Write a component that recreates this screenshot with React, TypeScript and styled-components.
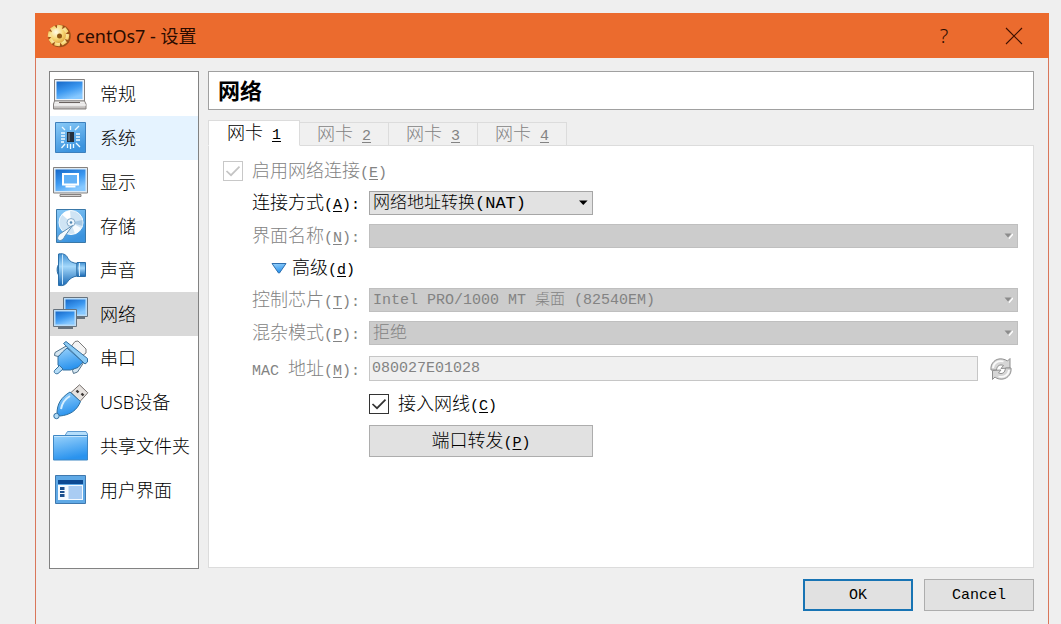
import React, { useState } from 'react';
import styled, { createGlobalStyle, css } from 'styled-components';

const ui = '"Noto Sans", "Noto Sans CJK SC", sans-serif';
const mono = '"Liberation Mono", "Noto Sans CJK SC", monospace';

const GlobalStyle = createGlobalStyle`
  *, *::before, *::after { box-sizing: border-box; }
  body { margin: 0; background: #efefef; color: #000; font-family: ${mono}; }
  button, input, select { font: inherit; color: inherit; margin: 0; }
`;

const Desktop = styled.div`
  display: flex;
  min-height: 100vh;
  padding: 13px 12px 0 35px;
`;

const Dialog = styled.section`
  flex: 1;
  min-width: 0;
  display: flex;
  flex-direction: column;
  background: #efefef;
  border: 1px solid #d9765a;
  border-top: 0;
  border-bottom: 0;
`;

const TitleBar = styled.header`
  display: flex;
  align-items: center;
  height: 45px;
  margin: 0 -1px;
  padding-left: 11px;
  gap: 4px;
  background: #eb6b2e;
  color: #2a0b00;
  font-family: ${ui};
`;

const Title = styled.h1`
  flex: 1;
  margin: 0;
  font-size: 18px;
  line-height: 24px;
  font-weight: 400;
`;

const CaptionButtons = styled.div`
  display: flex;
`;

const CaptionButton = styled.button`
  display: flex;
  align-items: center;
  justify-content: center;
  width: 70px;
  height: 45px;
  padding: 0;
  border: 0;
  background: none;
  font-size: 20px;
  font-weight: 300;
`;

const Body = styled.div`
  flex: 1;
  display: flex;
  gap: 9px;
  padding: 13px 14px 10px 13px;
`;

const Sidebar = styled.nav`
  width: 150px;
  flex: none;
  background: #fff;
  border: 1px solid #828282;
`;

const NavItem = styled.button<{ $tone?: 'hover' | 'active' }>`
  display: flex;
  align-items: center;
  gap: 11px;
  width: 100%;
  height: 44px;
  padding: 0 0 0 3px;
  border: 0;
  background: ${p => (p.$tone === 'active' ? '#d9d9d9' : p.$tone === 'hover' ? '#e5f3ff' : 'none')};
  font-family: ${ui};
  font-size: 18px;
  font-weight: 300;
  line-height: 24px;
  white-space: nowrap;
  text-align: left;
`;

const Main = styled.main`
  flex: 1;
  min-width: 0;
  display: flex;
  flex-direction: column;
  padding-bottom: 1px;
`;

const PageTitle = styled.h2`
  margin: 0 0 10px;
  height: 39px;
  padding-left: 9px;
  border: 1px solid #a0a0a0;
  background: #fff;
  font-family: ${ui};
  font-size: 22px;
  font-weight: 700;
  line-height: 36px;
`;

const TabList = styled.div`
  display: flex;
  align-items: flex-end;
  height: 26px;
  position: relative;
  margin-bottom: -1px;
`;

const Tab = styled.button<{ $active: boolean }>`
  display: flex;
  align-items: center;
  justify-content: center;
  height: 24px;
  width: 89px;
  padding: 0;
  background: #f0f0f0;
  border: 1px solid #dcdcdc;
  border-left: 0;
  color: #838383;
  ${p =>
    p.$active &&
    css`
      width: 92px;
      height: 26px;
      background: #fff;
      color: #000;
      border-left: 1px solid #dcdcdc;
      border-bottom-color: #fff;
    `}
`;

const Panel = styled.div`
  flex: 1;
  padding: 14px 15px 20px 14px;
  background: #fff;
  border: 1px solid #dcdcdc;
`;

const Form = styled.div`
  display: grid;
  grid-template-columns: 20px 108px minmax(0, 1fr);
  column-gap: 9px;
  row-gap: 9px;
  align-items: center;
`;

const FieldLabel = styled.label<{ $off?: boolean }>`
  grid-column: 2;
  display: flex;
  color: ${p => (p.$off ? '#838383' : '#000')};
`;

const EnableLabel = styled(FieldLabel)`
  grid-column: 2 / 4;
`;

const TextRun = styled.span`
  display: block;
  height: 22px;
  padding-top: 1px;
  font-size: 18px;
  font-weight: 300;
  line-height: 22px;
  white-space: pre;
`;

const Latin = styled.span`
  font-size: 15px;
  font-weight: 400;
  line-height: 16px;
`;

const Key = styled.u`
  text-underline-offset: 2px;
  text-decoration-thickness: 1px;
`;

const SelectBox = styled.div<{ $fit?: boolean }>`
  display: grid;
  align-items: center;
  height: 24px;
  width: ${p => (p.$fit ? '224px' : 'auto')};
  & > * { grid-area: 1 / 1; }
  & > svg { justify-self: end; margin-right: 5px; pointer-events: none; }
`;

const Select = styled.select<{ $size: number }>`
  appearance: none;
  width: 100%;
  height: 24px;
  padding: 0 24px 0 3px;
  border: 1px solid #a6a6a6;
  border-radius: 0;
  background: #e2e2e2;
  font-size: ${p => p.$size}px;
  font-weight: 300;
  &:disabled {
    opacity: 1;
    color: #838383;
    background: #cccccc;
    border-color: #bfbfbf;
  }
`;

const AdvancedToggle = styled.button`
  grid-column: 2 / 4;
  justify-self: start;
  display: flex;
  align-items: center;
  gap: 5px;
  height: 22px;
  padding: 0 0 0 19px;
  border: 0;
  background: none;
`;

const MacRow = styled.div`
  display: flex;
  align-items: center;
  gap: 11px;
  height: 29px;
  padding-right: 5px;
`;

const TextInput = styled.input`
  flex: 1;
  min-width: 0;
  height: 25px;
  padding: 0 2px;
  border: 1px solid #c6c6c6;
  background: #f0f0f0;
  font-size: 15px;
  &:disabled { color: #838383; }
`;

const IconButton = styled.button`
  display: flex;
  padding: 0;
  border: 0;
  background: none;
`;

const CheckBox = styled.span`
  display: grid;
  width: 20px;
  height: 20px;
  & > * { grid-area: 1 / 1; }
  & > svg { pointer-events: none; }
`;

const CheckInput = styled.input`
  appearance: none;
  width: 20px;
  height: 20px;
  border: 1px solid #333;
  background: #fff;
  &:disabled { border-color: #c8c8c8; }
`;

const CableRow = styled.div`
  grid-column: 3;
  display: flex;
  align-items: center;
  gap: 9px;
  height: 24px;
`;

const PushButton = styled.button<{ $primary?: boolean; $wide?: boolean }>`
  display: flex;
  align-items: center;
  justify-content: center;
  width: ${p => (p.$wide ? '224px' : '110px')};
  height: 32px;
  padding: 0;
  background: #e1e1e1;
  border: ${p => (p.$primary ? '2px solid #1874b4' : '1px solid #adadad')};
  font-size: 15px;
`;

const FieldCell = styled.div`
  grid-column: 3;
`;

const Footer = styled.footer`
  display: flex;
  justify-content: flex-end;
  gap: 11px;
  padding: 0 14px 13px;
`;

/* Sets han characters at 18px and latin runs at half that advance; "_x" marks the mnemonic key. */
function Text({ children }: { children: string }) {
  const parts = children.match(/[\u4e00-\u9fff]+|[^\u4e00-\u9fff]+/g) ?? [];
  return (
    <TextRun>
      {parts.map((part, i) => {
        if (/[\u4e00-\u9fff]/.test(part)) return part;
        const at = part.indexOf('_');
        if (at < 0) return <Latin key={i}>{part}</Latin>;
        return (
          <Latin key={i}>
            {part.slice(0, at)}
            <Key>{part[at + 1]}</Key>
            {part.slice(at + 2)}
          </Latin>
        );
      })}
    </TextRun>
  );
}

function Arrow({ off }: { off?: boolean }) {
  return (
    <svg width="9" height="6" viewBox="0 0 9 6" aria-hidden="true">
      {off && <path d="M9 1 5 5.6" stroke="#fff" strokeWidth="1.4" />}
      <path d={off ? 'M.5.5h7L4 4.5z' : 'M0 .5h8.6L4.3 5z'} fill={off ? '#8b8b8b' : '#000'} />
    </svg>
  );
}

function Check({ id, off, defaultChecked }: { id: string; off?: boolean; defaultChecked?: boolean }) {
  const [on, setOn] = useState(!!defaultChecked);
  return (
    <CheckBox>
      <CheckInput id={id} type="checkbox" disabled={off} checked={on} onChange={e => setOn(e.target.checked)} />
      {on && (
        <svg width="20" height="20" viewBox="0 0 20 20" aria-hidden="true">
          <path d="M3.5 10l4.5 4.2L16.5 5.6" fill="none" stroke={off ? '#c4c4c4' : '#333'} strokeWidth="1.7" />
        </svg>
      )}
    </CheckBox>
  );
}

const HiddenDefs = styled.svg`
  display: block;
`;

function Gradients() {
  return (
    <HiddenDefs width="0" height="0" aria-hidden="true">
      <defs>
        <linearGradient id="screen" x1="0" y1="0" x2="0.5" y2="1">
          <stop offset="0" stopColor="#1668c8" />
          <stop offset="0.55" stopColor="#3c98f0" />
          <stop offset="1" stopColor="#86c8ff" />
        </linearGradient>
        <linearGradient id="sky" x1="0" y1="0" x2="0.4" y2="1">
          <stop offset="0" stopColor="#8acbf8" />
          <stop offset="1" stopColor="#3b93de" />
        </linearGradient>
        <linearGradient id="folder" x1="0" y1="0" x2="0.3" y2="1">
          <stop offset="0" stopColor="#9bd3fb" />
          <stop offset="1" stopColor="#2a93ee" />
        </linearGradient>
        <linearGradient id="cone" x1="0" y1="0" x2="0" y2="1">
          <stop offset="0" stopColor="#3f8fd2" />
          <stop offset="0.4" stopColor="#a4d8fb" />
          <stop offset="1" stopColor="#1868b4" />
        </linearGradient>
        <linearGradient id="metal" x1="0" y1="0" x2="0" y2="1">
          <stop offset="0" stopColor="#fff" />
          <stop offset="1" stopColor="#b4b0ae" />
        </linearGradient>
        <radialGradient id="gold" gradientUnits="userSpaceOnUse" cx="10" cy="9" r="15">
          <stop offset="0" stopColor="#fffbe8" />
          <stop offset="0.45" stopColor="#f8d978" />
          <stop offset="1" stopColor="#d48a1c" />
        </radialGradient>
      </defs>
    </HiddenDefs>
  );
}

const icons: Record<string, React.ReactNode> = {
  general: (
    <>
      <path d="M1.5 3.5h30V25h-30z" fill="#eef3f8" stroke="#85817f" />
      <path d="M3.5 5.5h26v17.5h-26z" fill="url(#screen)" />
      <path d="M1.5 25h30l1.500 3v5H.5v-5z" fill="url(#metal)" stroke="#85817f" />
      <path d="M6 26.500h21" stroke="#69625f" />
      <path d="M1 29h32" stroke="#fff" />
    </>
  ),
  system: (
    <>
      <path d="M2.500 2.500h30v30h-30z" fill="url(#sky)" stroke="#3d80bd" />
      <path d="M14 12h7v10h-7z" fill="#25303d" />
      <path d="M15 13h2v8h-2z" fill="#5a6876" />
      <path
        d="M17.500 6v4M22 10l4-4M12 10l-3-3M8 13h4M8 16h4M8 19h4M8 22h3M23 14h4M23 17h4M23 20h4M23 23l4 4M12 24l-3.500 4M14.500 24v4M17.500 24v5M20.500 24v4"
        stroke="#eefaff"
        strokeWidth="1.300"
      />
    </>
  ),
  display: (
    <>
      <path d="M.5 3.500h34V29H.5z" fill="#dceaf5" stroke="#85817f" />
      <path d="M2.500 5.500h30V27h-30z" fill="url(#screen)" />
      <path d="M10 10h15v10.500H10z" fill="#63b1f6" stroke="#fff" strokeWidth="2" />
      <path d="M12.500 22.500h10" stroke="#fff" strokeWidth="2" />
      <path d="M7 30.500h21v2H7z" fill="#d5d2d0" stroke="#85817f" />
    </>
  ),
  storage: (
    <>
      <path d="M3.500 1.500h29v33h-29z" fill="url(#sky)" stroke="#3a78a8" />
      <circle cx="18" cy="14.500" r="12" fill="#cfe4f4" stroke="#f4fbff" />
      <path d="M18 14.500 9 6.500a12 12 0 0 1 8-4z" fill="#fff" />
      <path d="M18 14.500 28 20a12 12 0 0 1-6 6z" fill="#f7fcff" />
      <path d="M18 14.500 29.500 12v6z" fill="#a6c8e3" />
      <circle cx="18" cy="14.500" r="4" fill="#eff7fd" stroke="#87adcb" />
      <circle cx="18" cy="14.500" r="1.300" fill="#5489b4" />
      <path d="M19.500 17.500 9 24.500c-4 2.500-5.500 6-3.500 7.500s5-.5 6.500-4z" fill="#f5fafd" stroke="#5f8fb5" />
    </>
  ),
  sound: (
    <>
      <path d="M6 12c-2.500 2.500-2.500 9 0 11.500z" fill="#2d7fc2" stroke="#2c6fa8" />
      <path d="M5.500 2c5.500-1 8 1 9.500 4.500 1.500 3 5 4.500 9 5v12.500c-4 .5-8 3-10 6.500-1.500 2.500-4 3.500-8.500 3z" fill="url(#cone)" stroke="#2c6fa8" />
      <path d="M9.500 2.500v30" stroke="#c6e6fb" />
      <path d="M24 10.500h8.500v14H24z" fill="url(#cone)" stroke="#2c6fa8" />
      <path d="M26.500 11v13" stroke="#d7eefd" />
    </>
  ),
  network: (
    <>
      <path d="M10.500 1.500h24v19h-24z" fill="#b9dcf8" stroke="#66727d" />
      <path d="M12.500 3.500h20v15h-20z" fill="url(#screen)" />
      <path d="M24 22h8" stroke="#66727d" strokeWidth="2" />
      <path d="M.5 13.500h23v17H.5z" fill="#b9dcf8" stroke="#66727d" />
      <path d="M2.500 15.500h19v13h-19z" fill="url(#screen)" />
      <path d="M5 32h15" stroke="#66727d" strokeWidth="2" />
    </>
  ),
  serial: (
    <>
      <path d="M18.500 6l3.500-4.500 3-.5 8 8v4l-4 3z" fill="#f4f4f4" stroke="#7a7a7a" />
      <path d="M14 5.500l3 3-12 8-3.500-1 .5-3z" fill="#d5e6f1" stroke="#52738c" />
      <path d="M28 19l3 3-6.500 10-4 1.500-1-3z" fill="#d5e6f1" stroke="#52738c" />
      <path d="M9.500 12 14 8l16 14-5 5.500-7.500 2.500H9.500L5 25V17z" fill="url(#folder)" stroke="#336f9f" />
      <path d="M10.500 3.500 13 1.500l21.500 17v3.500l-2.500 2z" fill="#8ccbf5" stroke="#336f9f" />
      <path d="M6.500 25.500l3.500 3.500-5 4.500c-2.500 1-4.500-1-3.500-3z" fill="#b4dcf7" stroke="#336f9f" />
    </>
  ),
  usb: (
    <>
      <path d="M18 8.500 26.500.8l8.300 8L27 17.500z" fill="#e6e2df" stroke="#77706d" />
      <path d="M23.500 6.500l2 2M28.500 9.500l2 2" stroke="#3b3533" strokeWidth="2.400" />
      <path d="M4 29.500C4 20 8 13.500 17 8l10.500 9.500C24 26.500 17 31 7 32z" fill="url(#folder)" stroke="#2d6f9f" />
      <path d="M8 25c1-6 4-10 9-13" stroke="#d6efff" strokeWidth="2" fill="none" />
      <circle cx="3.500" cy="32" r="2.700" fill="#b4dcf7" stroke="#336f9f" />
    </>
  ),
  folder: (
    <>
      <path d="M12 7.500 14.500 3.500h18.500L34.500 6v4H12z" fill="#b5defb" stroke="#5f9bd0" />
      <path d="M.5 7.500h34v24.500H.5z" fill="url(#folder)" stroke="#3f87c4" />
      <path d="M1 8.500h33" stroke="#c5e6fe" />
    </>
  ),
  ui: (
    <>
      <path d="M2.500 3.500h30v28h-30z" fill="#5fa9e6" stroke="#3f78ae" />
      <path d="M5 8h25v4H5z" fill="#0d4a93" />
      <path d="M5 13h25v15H5z" fill="#f4f9fe" />
      <path d="M15.500 14H29v13H15.500z" fill="#a9ccf3" />
      <path d="M7 15h4.500v3H7zM7 19h4.500v2H7zM7 22h4.500v3H7z" fill="#1a4f8e" />
    </>
  ),
};

const sections: { icon: string; name: string; tone?: 'hover' | 'active' }[] = [
  { icon: 'general', name: '常规' },
  { icon: 'system', name: '系统', tone: 'hover' },
  { icon: 'display', name: '显示' },
  { icon: 'storage', name: '存储' },
  { icon: 'sound', name: '声音' },
  { icon: 'network', name: '网络', tone: 'active' },
  { icon: 'serial', name: '串口' },
  { icon: 'usb', name: 'USB设备' },
  { icon: 'folder', name: '共享文件夹' },
  { icon: 'ui', name: '用户界面' },
];

function GearIcon() {
  const teeth = [10, 55, 100, 145, 190, 235, 280, 325];
  return (
    <svg width="26" height="26" viewBox="0 0 26 26" aria-hidden="true">
      <circle cx="13.500" cy="13" r="11.300" fill="#8a4a12" opacity="0.8" />
      {teeth.map(a => (
        <path key={a} d="M10 7V2.500h4.500V7z" fill="url(#gold)" stroke="url(#gold)" strokeLinejoin="round" transform={`rotate(${a} 12.500 12.500)`} />
      ))}
      <circle cx="12.500" cy="12.500" r="7.500" fill="url(#gold)" />
      <circle cx="13.500" cy="13" r="2.500" fill="#8f5613" />
    </svg>
  );
}

function RefreshIcon() {
  return (
    <svg width="24" height="24" viewBox="0 0 24 24" aria-hidden="true">
      <g fill="#d6d6d6" stroke="#909090" strokeWidth="1" strokeLinejoin="round">
        <path d="M2 13C1 6 7 .8 13.500 2c2 .3 3.500 1 5 2L21 1.500V11l-9 .5 2.500-3C11 7 8 8.500 7.500 13z" />
        <path d="M22 11c1 7-5 12.200-11.500 11-2-.3-3.500-1-4.500-2l-2.500 2.500V13.500l8.500-.5-2.500 3c3.500 1.500 6.500 0 7-5z" />
      </g>
      <path d="M4 11c.5-5 5.500-8 10.500-6.500M20 13c-.5 5-5.500 8-10.500 6.500" fill="none" stroke="#fafafa" strokeWidth="1.800" />
    </svg>
  );
}

export default function App() {
  const [tab, setTab] = useState(1);
  return (
    <>
      <GlobalStyle />
      <Gradients />
      <Desktop>
        <Dialog aria-label="centOs7 - 设置">
          <TitleBar>
            <GearIcon />
            <Title>centOs7 - 设置</Title>
            <CaptionButtons>
              <CaptionButton type="button">?</CaptionButton>
              <CaptionButton type="button" aria-label="关闭">
                <svg width="18" height="18" viewBox="0 0 18 18" aria-hidden="true">
                  <path d="M1 1l16 16M17 1 1 17" stroke="#3d1000" strokeWidth="1.1" />
                </svg>
              </CaptionButton>
            </CaptionButtons>
          </TitleBar>
          <Body>
            <Sidebar>
              {sections.map(s => (
                <NavItem key={s.icon} type="button" $tone={s.tone}>
                  <svg width="36" height="36" viewBox="0 0 36 36" fill="none" aria-hidden="true">
                    {icons[s.icon]}
                  </svg>
                  {s.name}
                </NavItem>
              ))}
            </Sidebar>
            <Main>
              <PageTitle>网络</PageTitle>
              <TabList role="tablist">
                {[1, 2, 3, 4].map(n => (
                  <Tab key={n} type="button" role="tab" aria-selected={tab === n} $active={tab === n} onClick={() => setTab(n)}>
                    <Text>{`网卡 _${n}`}</Text>
                  </Tab>
                ))}
              </TabList>
              <Panel role="tabpanel">
                <Form>
                  <Check id="enable" off defaultChecked />
                  <EnableLabel htmlFor="enable" $off>
                    <Text>启用网络连接(_E)</Text>
                  </EnableLabel>

                  <FieldLabel htmlFor="attached">
                    <Text>连接方式(_A):</Text>
                  </FieldLabel>
                  <SelectBox $fit>
                    <Select id="attached" $size={17}>
                      <option>网络地址转换(NAT)</option>
                    </Select>
                    <Arrow />
                  </SelectBox>

                  <FieldLabel htmlFor="name" $off>
                    <Text>界面名称(_N):</Text>
                  </FieldLabel>
                  <SelectBox>
                    <Select id="name" $size={17} disabled />
                    <Arrow off />
                  </SelectBox>

                  <AdvancedToggle type="button" aria-expanded="true">
                    <svg width="16" height="12" viewBox="0 0 16 12" aria-hidden="true">
                      <path d="M1 1.500h14L8.500 11h-1z" fill="url(#folder)" stroke="#2f6fae" strokeLinejoin="round" />
                    </svg>
                    <Text>高级(_d)</Text>
                  </AdvancedToggle>

                  <FieldLabel htmlFor="chip" $off>
                    <Text>控制芯片(_T):</Text>
                  </FieldLabel>
                  <SelectBox>
                    <Select id="chip" $size={15} disabled>
                      <option>Intel PRO/1000 MT 桌面 (82540EM)</option>
                    </Select>
                    <Arrow off />
                  </SelectBox>

                  <FieldLabel htmlFor="promiscuous" $off>
                    <Text>混杂模式(_P):</Text>
                  </FieldLabel>
                  <SelectBox>
                    <Select id="promiscuous" $size={17} disabled>
                      <option>拒绝</option>
                    </Select>
                    <Arrow off />
                  </SelectBox>

                  <FieldLabel htmlFor="mac" $off>
                    <Text>MAC 地址(_M):</Text>
                  </FieldLabel>
                  <MacRow>
                    <TextInput id="mac" type="text" defaultValue="080027E01028" disabled />
                    <IconButton type="button" disabled aria-label="刷新">
                      <RefreshIcon />
                    </IconButton>
                  </MacRow>

                  <CableRow>
                    <Check id="cable" defaultChecked />
                    <label htmlFor="cable">
                      <Text>接入网线(_C)</Text>
                    </label>
                  </CableRow>

                  <FieldCell>
                    <PushButton type="button" $wide>
                      <Text>端口转发(_P)</Text>
                    </PushButton>
                  </FieldCell>
                </Form>
              </Panel>
            </Main>
          </Body>
          <Footer>
            <PushButton type="button" $primary>OK</PushButton>
            <PushButton type="button">Cancel</PushButton>
          </Footer>
        </Dialog>
      </Desktop>
    </>
  );
}
